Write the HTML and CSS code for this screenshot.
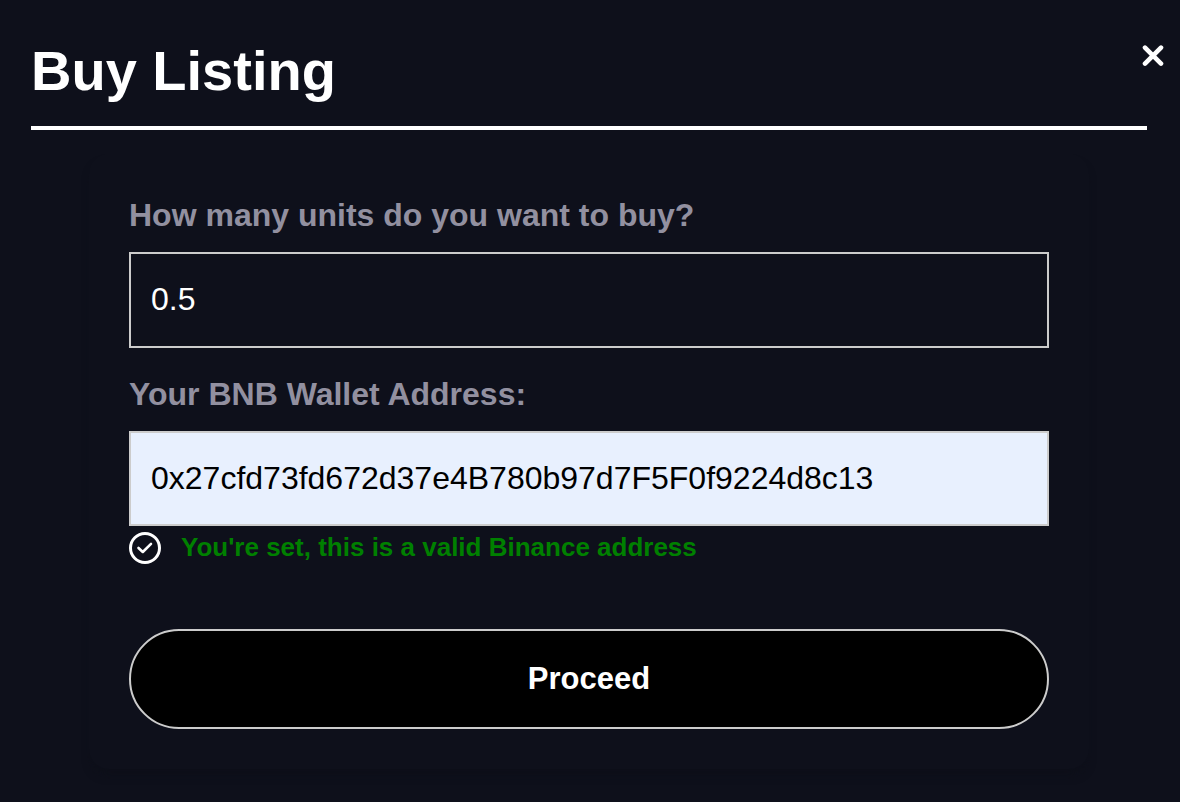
FILE: index.html
```html
<!DOCTYPE html>
<html lang="en">
<head>
<meta charset="utf-8">
<meta name="viewport" content="width=device-width, initial-scale=1">
<title>Buy Listing</title>
<link rel="stylesheet" href="styles.css">
</head>
<body>
<main class="dialog">
  <header class="dialog-header">
    <h1 class="title">Buy Listing</h1>
    <button class="close" type="button" aria-label="Close">
      <svg class="close-icon" viewBox="0 0 22 22" aria-hidden="true"><path d="M3 2.6 19 18.6M19 2.6 3 18.6"/></svg>
    </button>
  </header>
  <form class="card">
    <label class="label" for="units">How many units do you want to buy?</label>
    <input class="field" id="units" type="text" value="0.5">
    <label class="label" for="wallet">Your BNB Wallet Address:</label>
    <input class="field field-filled" id="wallet" type="text" spellcheck="false" value="0x27cfd73fd672d37e4B780b97d7F5F0f9224d8c13">
    <p class="status">
      <svg class="status-icon" viewBox="0 0 32 32" aria-hidden="true"><circle cx="16" cy="16" r="14.5"/><path d="M9.5 16 13.8 20 22 11.8" stroke-width="2.6"/></svg>
      <span class="status-text">You're set, this is a valid Binance address</span>
    </p>
    <button class="proceed" type="button">Proceed</button>
  </form>
</main>
</body>
</html>
```
FILE: styles.css
```css
* {
  box-sizing: border-box;
}

body {
  margin: 0;
  min-height: 100vh;
  background: #0e101b;
  color: #fff;
  font-family: "Liberation Sans", Arial, sans-serif;
}

.dialog {
  padding: 39px 33px 22px 31px;
}

.dialog-header {
  display: flex;
  justify-content: space-between;
  align-items: flex-start;
  border-bottom: 4px solid #fff;
  padding-bottom: 23px;
}

.title {
  margin: 0;
  font-size: 56px;
  line-height: 64px;
}

.close {
  display: flex;
  margin: 6px -17px 0 0;
  padding: 0;
  border: 0;
  background: none;
  color: #fff;
}

.close-icon {
  width: 22px;
  height: 22px;
  fill: none;
  stroke: currentColor;
  stroke-width: 4.6;
  stroke-linecap: round;
}

.card {
  display: flex;
  flex-direction: column;
  margin: 24px 58px 0;
  padding: 40px;
  border-radius: 20px;
  box-shadow: 0 8px 8px -2px #0d0f19;
}

.label {
  margin-bottom: 16px;
  color: #9290a0;
  font-size: 32px;
  font-weight: 700;
  line-height: 42px;
}

.field {
  width: 100%;
  height: 96px;
  margin: 0 0 25px;
  padding: 0 20px 2px;
  border: 2px solid #ccc;
  border-radius: 0;
  background: transparent;
  color: #fff;
  font-family: inherit;
  font-size: 32px;
}

.field-filled {
  height: 95px;
  margin-bottom: 6px;
  padding-bottom: 0;
  background: #e8f0fe;
  color: #000;
}

.status {
  display: flex;
  align-items: center;
  gap: 20px;
  margin: 0 0 65px;
  color: #008000;
  font-size: 26px;
  font-weight: 700;
  line-height: 30px;
}

.status-text {
  padding-bottom: 2px;
}

.status-icon {
  flex: none;
  width: 32px;
  height: 32px;
  fill: none;
  stroke: #fff;
  stroke-width: 3;
  stroke-linecap: round;
  stroke-linejoin: round;
}

.proceed {
  height: 100px;
  padding: 0 20px;
  border: 2px solid #ccc;
  border-radius: 50px;
  background: #000;
  color: #fff;
  font-family: inherit;
  font-size: 31px;
  font-weight: 700;
}
```
